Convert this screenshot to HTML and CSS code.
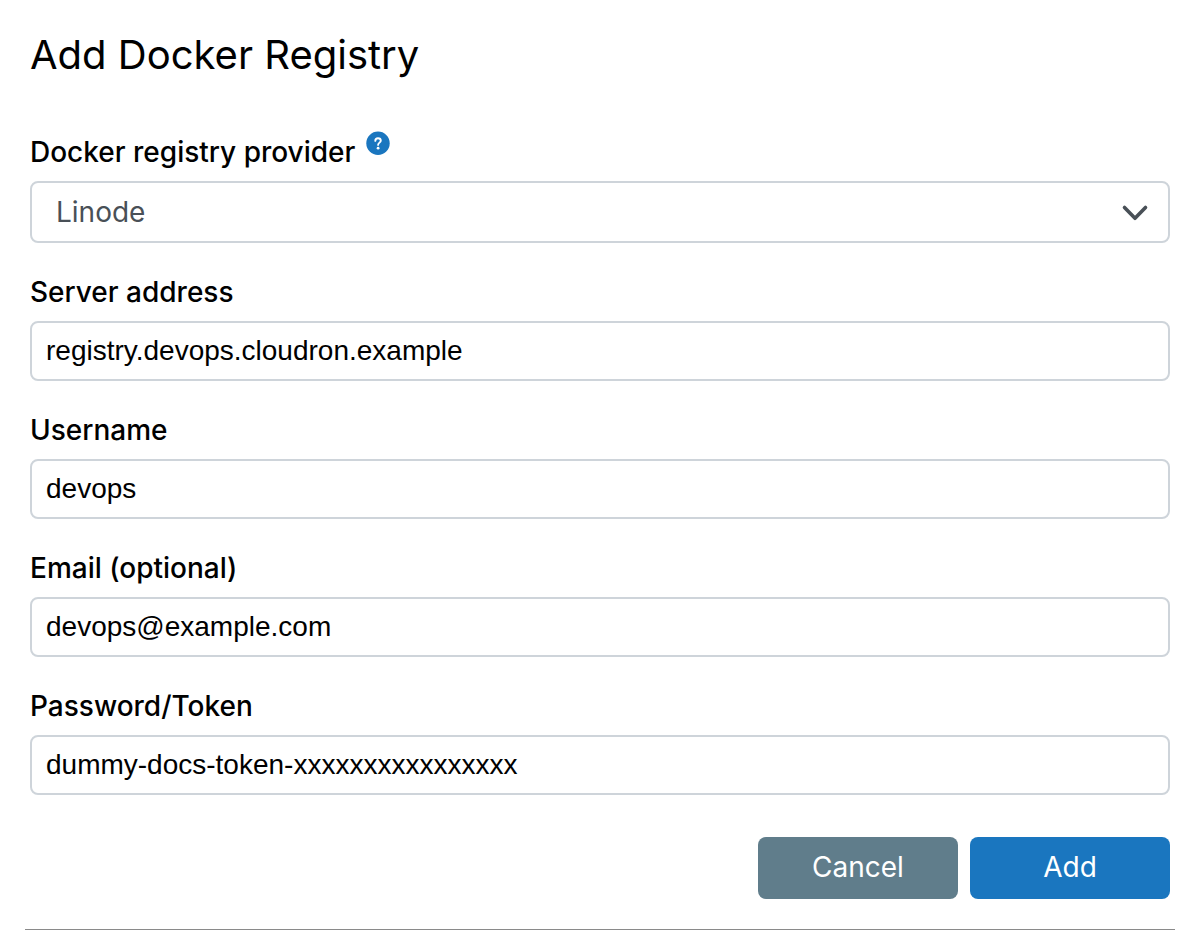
FILE: index.html
```html
<!DOCTYPE html>
<html lang="en">
<head>
  <meta charset="UTF-8">
  <meta name="viewport" content="width=device-width, initial-scale=1.0">
  <title>Add Docker Registry</title>
  <link rel="stylesheet" href="styles.css">
</head>
<body>
  <main class="dialog">
    <h1 class="dialog-title">Add Docker Registry</h1>

    <form class="dialog-form">
      <div class="form-group">
        <div class="label-row">
          <label for="provider">Docker registry provider</label>
          <a class="help" href="#" aria-label="Help">
            <svg viewBox="0 0 24 24" aria-hidden="true">
              <circle cx="12" cy="12.3" r="11.7" fill="#1a76bf"/>
              <path d="M9.3 9.9C9.3 8.2 10.4 7.2 12 7.2s2.8 1 2.8 2.5c0 1.9-2.7 2-2.7 4.2" fill="none" stroke="#fff" stroke-width="1.9" stroke-linecap="round" stroke-linejoin="round"/>
              <circle cx="12.1" cy="17.2" r="1.4" fill="#fff"/>
            </svg>
          </a>
        </div>
        <div class="select-wrap">
          <select id="provider">
            <option selected>Linode</option>
          </select>
          <svg class="chevron" viewBox="0 0 28 28" aria-hidden="true">
            <path d="M3.5 8.5L14 19.3 24.5 8.5" fill="none" stroke="#495057" stroke-width="3.6" stroke-linecap="round" stroke-linejoin="round"/>
          </svg>
        </div>
      </div>

      <div class="form-group">
        <label for="server">Server address</label>
        <input type="text" id="server" value="registry.devops.cloudron.example">
      </div>

      <div class="form-group">
        <label for="username">Username</label>
        <input type="text" id="username" value="devops">
      </div>

      <div class="form-group">
        <label for="email">Email (optional)</label>
        <input type="email" id="email" value="devops@example.com">
      </div>

      <div class="form-group">
        <label for="token">Password/Token</label>
        <input type="text" id="token" value="dummy-docs-token-xxxxxxxxxxxxxxxx">
      </div>

      <div class="buttons">
        <button type="button" class="btn btn-secondary">Cancel</button>
        <button type="submit" class="btn btn-primary">Add</button>
      </div>
    </form>
  </main>
</body>
</html>
```

FILE: styles.css
```css
* {
  box-sizing: border-box;
}

body {
  margin: 0;
  background-color: #fff;
  color: #000;
  font-family: Inter, sans-serif;
  font-size: 28px;
}

.dialog {
  margin: 0 25px;
  padding: 30px 5px;
  border-bottom: 1px solid #8a8a8a;
}

.dialog-title {
  margin: 0 0 56px;
  font-size: 40px;
  font-weight: 400;
  line-height: 49px;
}

.dialog-form {
  display: flex;
  flex-direction: column;
  gap: 32px;
}

.form-group {
  display: flex;
  flex-direction: column;
  gap: 12px;
}

label {
  font-weight: 500;
  line-height: 34px;
}

.label-row {
  display: flex;
  align-items: flex-start;
  gap: 11px;
  height: 34px;
}

.help {
  width: 24px;
  height: 24px;
  margin-top: -4px;
}

.help svg {
  display: block;
}

input,
select {
  width: 100%;
  height: 60px;
  margin: 0;
  padding: 0 14px;
  border: 2px solid #ced4da;
  border-radius: 8px;
  background-color: #fff;
  color: #000;
  font-family: "Liberation Sans", Arial, sans-serif;
  font-size: 28px;
}

.select-wrap {
  position: relative;
}

select {
  display: block;
  height: 62px;
  padding: 0 64px 0 24px;
  color: #495057;
  font-family: Inter, sans-serif;
  appearance: none;
}

.chevron {
  position: absolute;
  top: 18px;
  right: 21px;
  width: 28px;
  height: 28px;
  pointer-events: none;
}

.buttons {
  display: flex;
  justify-content: flex-end;
  gap: 12px;
  margin-top: 10px;
}

.btn {
  min-width: 200px;
  height: 62px;
  padding: 0 24px 2px;
  border: none;
  border-radius: 8px;
  color: #fff;
  font-family: Inter, sans-serif;
  font-size: 28px;
  cursor: pointer;
}

.btn-secondary {
  background-color: #607d8b;
}

.btn-primary {
  background-color: #1a76bf;
}

.btn-primary:hover {
  background-color: #1565a5;
}
```
